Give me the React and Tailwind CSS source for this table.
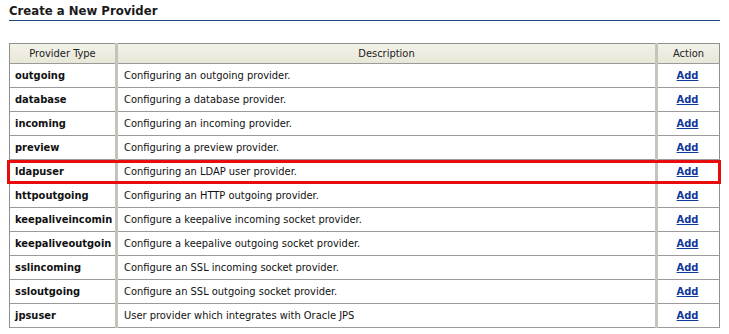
import React from "react";

const rows = [
  ["outgoing", "Configuring an outgoing provider."],
  ["database", "Configuring a database provider."],
  ["incoming", "Configuring an incoming provider."],
  ["preview", "Configuring a preview provider."],
  ["ldapuser", "Configuring an LDAP user provider."],
  ["httpoutgoing", "Configuring an HTTP outgoing provider."],
  ["keepaliveincomin", "Configure a keepalive incoming socket provider."],
  ["keepaliveoutgoin", "Configure a keepalive outgoing socket provider."],
  ["sslincoming", "Configure an SSL incoming socket provider."],
  ["ssloutgoing", "Configure an SSL outgoing socket provider."],
  ["jpsuser", "User provider which integrates with Oracle JPS"],
];

export default function App() {
  return (
    <div
      className="w-[729px] h-[334px] bg-white overflow-hidden pl-[9px] pt-[4px]"
      style={{ fontFamily: '"DejaVu Sans Condensed", "DejaVu Sans", sans-serif' }}
    >
      <div className="w-[711px] border-b border-[#1d4776] pb-[3px]">
        <h1 className="text-[13px] leading-[13px] font-bold text-[#1a1a1a]">
          Create a New Provider
        </h1>
      </div>
      <div className="relative mt-[22px] w-[710px]">
        <table className="table-fixed border-collapse w-[710px] text-[11px] border border-[#8f8f8f]">
          <colgroup>
            <col className="w-[107px]" />
            <col className="w-[540px]" />
            <col className="w-[63px]" />
          </colgroup>
          <thead>
            <tr className="h-[20px] bg-gradient-to-b from-[#f3f2ea] to-[#e8e6d6]">
              <th className="font-normal text-[#222] text-center border-b border-[#9a9a9a] border-r-[3px] border-r-[#c4c4bc] p-0 pt-[1px]">
                Provider Type
              </th>
              <th className="font-normal text-[#222] text-center border-b border-[#9a9a9a] border-r-[3px] border-r-[#c4c4bc] p-0 pt-[1px]">
                Description
              </th>
              <th className="font-normal text-[#222] text-center border-b border-[#9a9a9a] p-0 pt-[1px]">
                Action
              </th>
            </tr>
          </thead>
          <tbody>
            {rows.map(([t, d]) => (
              <tr key={t} className="h-[24px]">
                <td className="font-bold text-[#111] pl-[5px] pr-0 pt-[2px] border-b border-[#9a9a9a] border-r-[3px] border-r-[#c4c4bc] whitespace-nowrap overflow-hidden">
                  {t}
                </td>
                <td className="text-[#111] pl-[6px] pt-[2px] border-b border-[#9a9a9a] border-r-[3px] border-r-[#c4c4bc] whitespace-nowrap">
                  {d}
                </td>
                <td className="text-center pt-[2px] pr-[2px] border-b border-[#9a9a9a]">
                  <a href="#" className="font-bold underline text-[#10389a]">
                    Add
                  </a>
                </td>
              </tr>
            ))}
          </tbody>
        </table>
        <div className="absolute left-[-2px] top-[117px] w-[714px] h-[24px] border-[3px] border-[#e80c0c] pointer-events-none" />
      </div>
    </div>
  );
}
